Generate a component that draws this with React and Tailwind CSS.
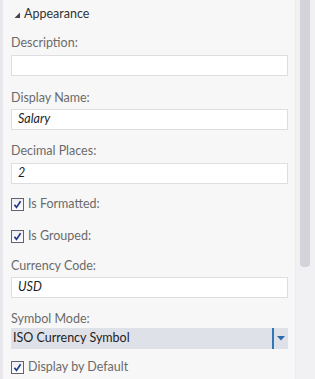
import React from "react";

const font = { fontFamily: '"Lato", "Liberation Sans", sans-serif' };

function Label({ children, mt }) {
  return (
    <div className={`h-[16px] leading-[16px] text-[12.5px] text-[#6b6b6b] ${mt}`}>{children}</div>
  );
}

function Input({ value, mt }) {
  return (
    <div className={`h-[21px] bg-white border border-[#dedede] flex items-center pl-[6px] text-[12.5px] italic text-[#1e1e1e] ${mt}`}>
      {value}
    </div>
  );
}

function Check({ label, mt }) {
  return (
    <div className={`h-[16px] flex items-center gap-[4px] ${mt}`}>
      <div className="w-[13px] h-[13px] border border-[#62626e] bg-gradient-to-b from-[#eeeef4] to-white flex items-center justify-center">
        <svg width="9" height="9" viewBox="0 0 9 9">
          <path d="M1.4 4.8 L3.5 7.4 L7.6 1.3" fill="none" stroke="#1d3a84" strokeWidth="1.7" />
        </svg>
      </div>
      <span className="text-[12.5px] text-[#6b6b6b] leading-[16px]">{label}</span>
    </div>
  );
}

export default function App() {
  return (
    <div className="w-[315px] h-[379px] overflow-hidden flex bg-[#f7f7f7]" style={font}>
      <div className="w-[3px] bg-[#e8e8ec]" />
      <div className="flex-1 flex flex-col pl-[8px] pr-[7px] pt-[6px]">
        <div className="h-[16px] flex items-center">
          <svg width="12" height="16" viewBox="0 0 12 16" className="ml-[-1px]">
            <polygon points="10,6.5 10,12 4.5,12" fill="#444" />
          </svg>
          <span className="ml-[2px] text-[12.5px] text-[#333] leading-[16px]">Appearance</span>
        </div>
        <Label mt="mt-[13px]">Description:</Label>
        <Input value="" mt="mt-[4px]" />
        <Label mt="mt-[14px]">Display Name:</Label>
        <Input value="Salary" mt="mt-[3px]" />
        <Label mt="mt-[13px]">Decimal Places:</Label>
        <Input value="2" mt="mt-[4px]" />
        <Check label="Is Formatted:" mt="mt-[12px]" />
        <Check label="Is Grouped:" mt="mt-[16px]" />
        <Label mt="mt-[14px]">Currency Code:</Label>
        <Input value="USD" mt="mt-[3px]" />
        <Label mt="mt-[13px]">Symbol Mode:</Label>
        <div className="mt-[1px] h-[21px] bg-[#dfe1e9] flex items-center">
          <span className="flex-1 pl-[2px] text-[12.5px] text-[#1e1e1e]">ISO Currency Symbol</span>
          <div className="w-[16px] h-full border-l-2 border-[#2f77b8] flex items-center justify-center">
            <svg width="8" height="5" viewBox="0 0 8 5">
              <polygon points="0,0 8,0 4,4.5" fill="#2a6aa8" />
            </svg>
          </div>
        </div>
        <Check label="Display by Default" mt="mt-[10px]" />
      </div>
      <div className="w-[20px] bg-[#f1f1f4] flex pl-[4px] border-l border-[#ececef]">
        <div className="w-[10px] h-[267px] bg-[#d3d3dc] rounded-b-[4px]" />
      </div>
    </div>
  );
}
